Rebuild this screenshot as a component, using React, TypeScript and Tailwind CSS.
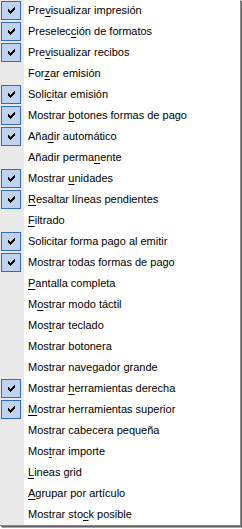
import React from 'react';

type Item = { label: string; key?: number; checked?: boolean };

const items: Item[] = [
    { label: "Previsualizar impresión", key: 3, checked: true },
    { label: "Preselección de formatos", key: 8, checked: true },
    { label: "Previsualizar recibos", key: 3, checked: true },
    { label: "Forzar emisión", key: 3 },
    { label: "Solicitar emisión", key: 4, checked: true },
    { label: "Mostrar botones formas de pago", key: 8, checked: true },
    { label: "Añadir automático", key: 3, checked: true },
    { label: "Añadir permanente", key: 12 },
    { label: "Mostrar unidades", key: 8, checked: true },
    { label: "Resaltar líneas pendientes", key: 0, checked: true },
    { label: "Filtrado", key: 0 },
    { label: "Solicitar forma pago al emitir", checked: true },
    { label: "Mostrar todas formas de pago", checked: true },
    { label: "Pantalla completa", key: 0 },
    { label: "Mostrar modo táctil", key: 1 },
    { label: "Mostrar teclado", key: 3 },
    { label: "Mostrar botonera" },
    { label: "Mostrar navegador grande" },
    { label: "Mostrar herramientas derecha", key: 8, checked: true },
    { label: "Mostrar herramientas superior", key: 0, checked: true },
    { label: "Mostrar cabecera pequeña" },
    { label: "Mostrar importe", key: 3 },
    { label: "Lineas grid", key: 0 },
    { label: "Agrupar por artículo", key: 0 },
    { label: "Mostrar stock posible", key: 11 },
];

const Check = () => (
    <svg width="7" height="7" viewBox="0 0 7 7" shapeRendering="crispEdges">
        <path d="M6 0h1v1h-1zM5 1h2v1h-2zM0 2h1v1h-1zM4 2h3v1h-3zM0 3h2v1h-2zM3 3h3v1h-3zM0 4h5v1h-5zM1 5h3v1h-3zM2 6h1v1h-1z" fill="#000" />
    </svg>
);

const Label = ({ label, k }: { label: string; k?: number }) => {
    if (k === undefined) return <span>{label}</span>;
    return (
        <span>
            {label.slice(0, k)}
            <span className="underline underline-offset-2">{label[k]}</span>
            {label.slice(k + 1)}
        </span>
    );
};

const MenuRow = ({ item }: { item: Item }) => (
    <div className="flex h-[21px] items-center">
        <div className="flex h-full w-[24px] shrink-0 items-center bg-[#e9e9e9] pl-[1px]">
            {item.checked && (
                <div className="flex h-[19px] w-[20px] items-center justify-center border border-[#316ac5] bg-[#c1d2ee]">
                    <Check />
                </div>
            )}
        </div>
        <div className="pl-[4px] text-[11px] leading-none text-black whitespace-nowrap">
            <Label label={item.label} k={item.key} />
        </div>
    </div>
);

export default function App() {
    return (
        <div className="w-[242px] h-[529px] bg-white font-['Liberation_Sans',Arial,sans-serif]">
            <div className="w-[241px] border-r border-b border-[#8a8a8a] shadow-[1px_1px_0_#5f5f5f,2px_2px_0_#a8a8a8]">
                {items.map((item, i) => (
                    <MenuRow key={i} item={item} />
                ))}
            </div>
        </div>
    );
}
